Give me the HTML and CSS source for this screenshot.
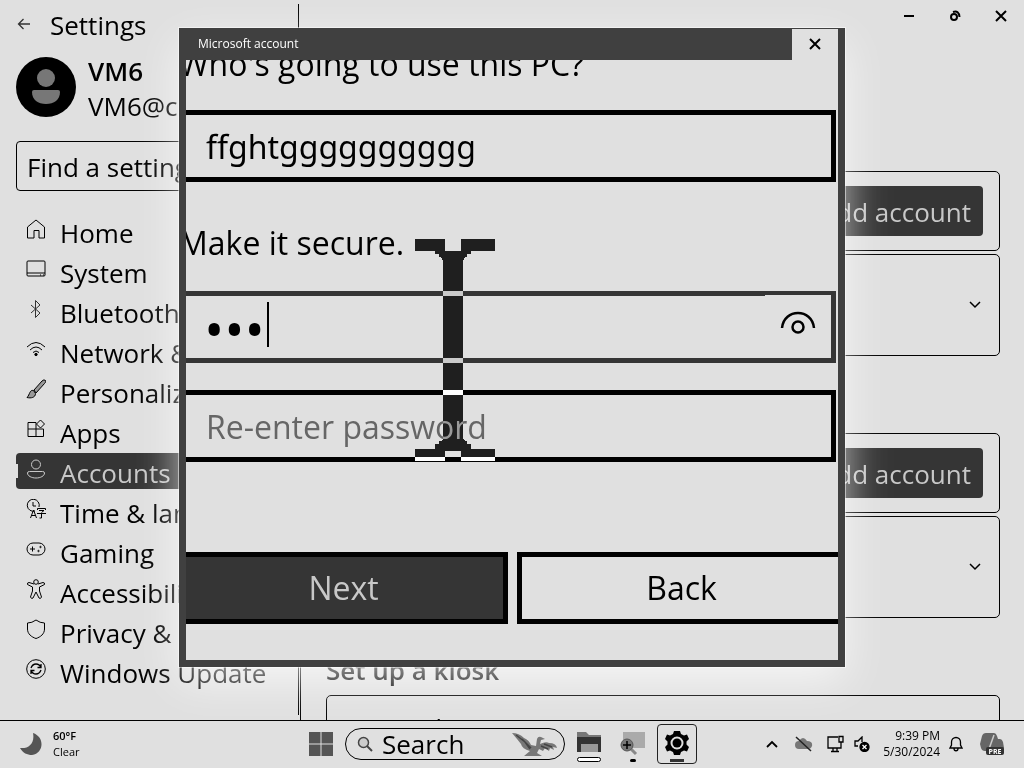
FILE: index.html
```
<!DOCTYPE html>
<html lang="en">
<head>
<meta charset="utf-8">
<meta name="viewport" content="width=device-width, initial-scale=1">
<title>Settings - Accounts</title>
<link rel="stylesheet" href="styles.css">
</head>
<body>
<main class="settings">
  <header class="titlebar">
    <div class="titlebar-left">
      <button class="plain back-nav" aria-label="Go back"><svg width="16" height="12" viewBox="0 0 16 12" fill="none" stroke="#333" stroke-width="1.300"><path d="M6.500 1 1.500 6l5 5M1.500 6H13"/></svg></button>
      <h1>Settings</h1>
    </div>
    <div class="window-controls">
      <button class="plain" aria-label="Minimize"><svg width="12" height="12" viewBox="0 0 12 12" stroke="#000" stroke-width="2"><path d="M1 6h10"/></svg></button>
      <button class="plain" aria-label="Restore"><svg width="12" height="12" viewBox="0 0 12 12" fill="none" stroke="#000" stroke-width="2"><circle cx="5" cy="7" r="3"/><path d="M4 2q6-2 6.500 5"/></svg></button>
      <button class="plain" aria-label="Close"><svg width="12" height="12" viewBox="0 0 12 12" stroke="#000" stroke-width="2"><path d="m1 1 10 10M11 1 1 11"/></svg></button>
    </div>
  </header>
  <div class="columns">
    <aside class="sidebar">
      <div class="profile">
        <svg width="60" height="60" viewBox="0 0 60 60"><circle cx="30" cy="30" r="30"/><circle cx="30" cy="21" r="9" fill="#777"/><path d="M18 33h24q2 0 2 2c0 8-6 12-14 12s-14-4-14-12q0-2 2-2z" fill="#777"/></svg>
        <div><strong>VM6</strong><p>VM6@contoso</p></div>
      </div>
      <input class="find" type="text" placeholder="Find a setting" aria-label="Find a setting">
      <nav>
        <a href="#"><svg viewBox="0 0 20 20"><path d="M1.500 8 10 1l8.500 7v11H13v-7.500H8V19H1.500z"/></svg>Home</a>
        <a href="#"><svg viewBox="0 0 20 20"><rect x="1" y="2" width="18" height="15" rx="1"/><path d="M1 14h18M14 16h1M17 16h1"/></svg>System</a>
        <a href="#"><svg viewBox="0 0 20 20"><path stroke="#333" d="m5 6 9 8-4.500 4.500v-17L14 6l-9 8"/></svg>Bluetooth &amp; devices</a>
        <a href="#"><svg viewBox="0 0 20 20"><path d="M1 8q9-9 18 0M4 11q6-6 12 0M7 13.500q3-3 6 0"/><circle cx="10" cy="15.500" r="1.200" fill="#000"/></svg>Network &amp; internet</a>
        <a href="#"><svg viewBox="0 0 20 20"><path fill="#999" d="m8 11 8-9q2-2 3.500-.5c.5 1 0 2-1 3L10 14zM7.500 11.500c-4-1-3.500 4-6.500 7 4 1 8.500 0 8.500-4z"/></svg>Personalization</a>
        <a href="#"><svg viewBox="0 0 20 20"><path d="M2 3.500h8v14H2zM2 10h15.500v7.500H10M14.500 1l4 4-4 4-4-4z"/></svg>Apps</a>
        <a href="#" class="selected" aria-current="page"><svg viewBox="0 0 20 20"><circle cx="10" cy="5.500" r="4.500"/><path d="M3.500 12.500h13q2 0 2 1.500c0 3-4 5-8.500 5s-8.500-2-8.500-5q0-1.500 2-1.500z"/></svg>Accounts</a>
        <a href="#"><svg viewBox="0 0 20 20"><path d="M9 12A6 6 0 1 1 13 8M7 3v4h3M4.500 19l3-8 3 8M5.500 16.500h4M11.500 11v-1.500h8V11M13 11.500h5l-2.500 2M11 14.500h9M15.500 14v5h-2"/></svg>Time &amp; language</a>
        <a href="#"><svg viewBox="0 0 20 20"><rect x="1" y="4" width="18" height="12" rx="6"/><path d="M6.500 7.500v5M4 10h5"/><circle cx="14.500" cy="8" r=".7"/><circle cx="12.500" cy="12" r=".7"/></svg>Gaming</a>
        <a href="#"><svg viewBox="0 0 20 20"><circle cx="10" cy="3" r="2.300"/><path d="M8 5 3 3.500q-2 0-1.500 2L6.500 8v4l-2 6q1 2.500 2.500 1l3-6 3 6q1.500 1.500 2.500-1l-2-6V8l5-2.500q.5-2-1.500-2L12 5"/></svg>Accessibility</a>
        <a href="#"><svg viewBox="0 0 20 20"><path d="M10 1q4 3 8.500 3v6c0 5-4 8-8.500 9.500C5.500 18 1.500 15 1.500 10V4Q6 4 10 1z"/></svg>Privacy &amp; security</a>
        <a href="#"><svg viewBox="0 0 20 20"><circle cx="10" cy="10" r="9.300"/><path stroke-width="1.300" d="M5 9q1.500-4 5-4t5 3.500M15 5v3.500h-3.500M15 11q-1.500 4-5 4t-5-3.500M5 15v-3.500h3.500"/></svg>Windows Update</a>
      </nav>
    </aside>
    <section class="content">
      <div class="group">
        <div class="card add-card"><button class="add">Add account</button></div>
        <div class="card user-card"><svg class="chevron" viewBox="0 0 12 8"><path d="m1 1 5 5 5-5"/></svg></div>
      </div>
      <div class="group">
        <div class="card add-card"><button class="add">Add account</button></div>
        <div class="card user-card"><svg class="chevron" viewBox="0 0 12 8"><path d="m1 1 5 5 5-5"/></svg></div>
      </div>
      <h2>Set up a kiosk</h2>
      <div class="card kiosk-card">Kiosk</div>
    </section>
  </div>
</main>

<div class="dialog" role="dialog" aria-label="Microsoft account">
  <header class="dialog-bar">
    <span>Microsoft account</span>
    <button class="plain dialog-close" aria-label="Close dialog"><svg width="12" height="12" viewBox="0 0 12 12" stroke="#000" stroke-width="2"><path d="m1 1 10 10M11 1 1 11"/></svg></button>
  </header>
  <div class="dialog-view">
    <form class="account-form">
      <label class="question" for="user">Who's going to use this PC?</label>
      <div class="field"><input id="user" type="text" value="ffghtgggggggggg"></div>
      <label class="secure" for="pass">Make it secure.</label>
      <div class="field focused">
        <input id="pass" type="password" value="abc"><i class="caret"></i>
        <button type="button" class="plain reveal" aria-label="Show password"><svg width="36" height="24" viewBox="0 0 36 24" fill="none" stroke="#000" stroke-width="2.500"><path d="M2 17C4-3 32-3 34 17"/><circle cx="18" cy="16" r="5.500"/></svg></button>
      </div>
      <div class="field"><input type="password" placeholder="Re-enter password" aria-label="Re-enter password"></div>
      <div class="actions"><button type="button" class="next">Next</button><button type="button">Back</button></div>
    </form>
  </div>
  <svg class="pointer" width="80" height="222" viewBox="0 0 80 222" fill="#fff" shape-rendering="crispEdges"><path d="M0 0H30V12H46V0H80V12H56V15H52V18H50L48 22V200L50 202H52V205H56V210H80V222H46V212H30V222H0V210H20V205H24V202H26L28 200V22L26 18H24V15H20V12H0z"/></svg>
</div>

<footer class="taskbar">
  <button class="plain weather"><svg width="22" height="22" viewBox="0 0 22 22"><path d="M13 0c12 4 11 20-1 22-5 0-9-2-12-7 9 1 15-5 13-15z" fill="#555"/></svg><span><b>60°F</b><br>Clear</span></button>
  <div class="apps">
    <button class="plain start" aria-label="Start"><svg width="24" height="24" viewBox="0 0 24 24" fill="#555"><path d="M0 0h11.500v11.500H0zM12.500 0H24v11.500H12.500zM0 12.500h11.500V24H0zM12.500 12.500H24V24H12.500z"/></svg></button>
    <label class="search"><svg width="16" height="16" viewBox="0 0 16 16" fill="#ccc" stroke="#444" stroke-width="1.500"><circle cx="6.500" cy="6.500" r="5"/><path d="m10 10 5 5" stroke-width="2"/></svg><input type="text" placeholder="Search" aria-label="Search"><svg width="46" height="24" viewBox="0 0 46 24"><path d="M0 1q7 0 12 5 5 2 7 7l5 1 1-7q1-3 4-2l4 2-4 1-1 4q6-3 9-1 7 0 8 5l-4-1 1 3-4-2-1 3-4-3-2 3-4-2-2 4 5 3H12l6-5q-8-2-9-7L5 7z" fill="#777"/><path d="m4 3 9 7 5 7M10 7l9 9M32 12l8 3M29 14l7 3" fill="none" stroke="#444" stroke-width="1.500"/></svg></label>
    <button class="plain app" aria-label="File Explorer"><svg width="26" height="32" viewBox="0 0 26 32"><path d="M1 1h9l3 3h12v17H1z" fill="#777"/><path d="M1 6h24v15H1z" fill="#333"/><path d="M5 21v-8h17v8z" fill="#999"/><rect x="1.500" y="26.500" width="23" height="4" rx="2" fill="#fff" stroke="#000"/></svg></button>
    <button class="plain app" aria-label="Magnifier"><svg width="26" height="32" viewBox="0 0 26 32"><path d="M3 1h22v16H3z" fill="#aaa"/><path d="m11 18 5 5" stroke="#888" stroke-width="3"/><circle cx="7" cy="14" r="6" fill="#777" stroke="#555"/><path d="M7 10v8M3 14h8" stroke="#000" stroke-width="1.500"/><rect x="10" y="28" width="6" height="3" rx="1.500"/></svg></button>
    <button class="app active" aria-label="Settings"><svg width="26" height="34" viewBox="0 0 26 34"><path fill-rule="evenodd" d="m10 3-1 3-3 1.500-3-1L1 11l2.500 2.500v3L1 19l2 4.500 3-1L9 24l1 3h6l1-3 3-1.500 3 1 2-4.500-2.500-2.500v-3L25 11l-2-4.500-3 1L17 6l-1-3zm3 5.500a6.500 6.500 0 1 1 0 13 6.500 6.500 0 0 1 0-13z"/><circle cx="13" cy="15" r="4.500"/><path d="M6 31h14v3H6z" fill="#333"/></svg></button>
  </div>
  <div class="tray">
    <button class="plain overflow" aria-label="Show hidden icons"><svg width="12" height="8" viewBox="0 0 12 8" fill="none" stroke="#000" stroke-width="1.800"><path d="m1 7 5-5 5 5"/></svg></button>
    <button class="plain cloud" aria-label="OneDrive"><svg width="18" height="16" viewBox="0 0 18 16"><path d="M4 13a4 4 0 0 1 0-8q4-6 8 0 6 0 5 5-1 3-4 3z" fill="#777"/><path d="m1 1 15 14" stroke="#222" stroke-width="1.500"/></svg></button>
    <button class="plain" aria-label="Network"><svg width="18" height="18" viewBox="0 0 18 18" fill="none" stroke="#000" stroke-width="1.300"><path d="M11 2H1v11h13V8M4 16.500h8M6 13v3M10 13v3M12 1.500h4V7h-4zM14 7v5"/></svg></button>
    <button class="plain" aria-label="Volume"><svg width="16" height="16" viewBox="0 0 16 16" fill="none" stroke="#000" stroke-width="1.300"><path d="M8 6V1L4 5H1v5h3"/><circle cx="10.500" cy="11" r="4.500" fill="#000"/><path d="m8.500 9 4 4M12.500 9l-4 4" stroke="#fff"/></svg></button>
    <button class="plain clock">9:39 PM<br>5/30/2024</button>
    <button class="plain" aria-label="Notifications"><svg width="14" height="16" viewBox="0 0 14 16" fill="none" stroke="#000" stroke-width="1.300"><path d="M2.500 9V6a4.500 4.500 0 0 1 9 0v3l1.500 3H1zM5 12.500c0 3 4 3 4 0"/></svg></button>
    <button class="plain copilot" aria-label="Copilot"><svg width="24" height="24" viewBox="0 0 24 24"><path d="M6 1h8q2 0 3 3l1 3h2q2 0 3 3l1 6q-1 3-4 3H5q-3 0-4-3L0 12 2 4q1-3 4-3z" fill="#666"/><path d="m14 3-5 14" stroke="#ccc" stroke-width="1.500"/><rect x="6" y="15" width="18" height="8" rx="2" fill="#333"/><text x="15" y="22" text-anchor="middle">PRE</text></svg></button>
  </div>
</footer>
</body>
</html>
```
FILE: styles.css
```
* { box-sizing: border-box; }
body {
  margin: 0;
  height: 100vh;
  display: flex;
  flex-direction: column;
  position: relative;
  overflow: hidden;
  background: #e0e0e0;
  color: #000;
  font: 26px/36px "Open Sans", "Noto Sans", sans-serif;
}
button, input { font: inherit; color: inherit; }
h1, h2, p { margin: 0; font-size: inherit; font-weight: 400; }
svg { display: block; flex: none; }
.plain { border: 0; padding: 0; background: none; }

.settings { flex: 1; min-height: 0; overflow: hidden; display: flex; flex-direction: column; }
.titlebar { display: flex; justify-content: space-between; align-items: flex-start; }
.titlebar-left { display: flex; align-items: center; gap: 17px; width: 299px; height: 53px; padding: 0 0 3px 17px; background: linear-gradient(#000, #000) right 4px / 1px 24px no-repeat; }
.back-nav { padding-bottom: 3px; }
.window-controls { display: flex; gap: 34px; padding: 10px 17px 0 0; }
.columns { flex: 1; min-height: 0; display: grid; grid-template-columns: 301px 1fr; }
.sidebar { min-width: 0; padding: 4px 16px 0; border-right: 1px solid #000; background: linear-gradient(#000, #000) right 1px top 0 / 1px 662px no-repeat; overflow: hidden; }
.profile { display: flex; gap: 12px; }
.profile strong { display: block; font-weight: 600; line-height: 28px; }
.profile p { line-height: 42px; }
.find { display: block; width: 100%; height: 50px; margin-top: 14px; padding: 2px 10px 0; border: 1px solid #000; border-radius: 4px; background: none; }
.find::placeholder, .search input::placeholder { color: #000; opacity: 1; }
nav { display: flex; flex-direction: column; gap: 4px; padding-top: 22px; }
nav a { display: flex; align-items: center; gap: 14px; height: 36px; padding: 4px 0 0 10px; border-radius: 4px; color: #000; text-decoration: none; white-space: nowrap; }
nav svg { width: 20px; height: 20px; margin-bottom: 8px; fill: none; stroke: currentColor; }
.selected { background: linear-gradient(#e0e0e0, #e0e0e0) 0 11px / 2px 14px no-repeat #353535; color: #c8c8c8; }

.content { padding: 0 24px 0 25px; }
.group { display: flex; flex-direction: column; gap: 3px; padding-top: 77px; }
.group:first-child { padding-top: 118px; }
.card { border: 1px solid #000; border-radius: 5px; }
.add-card { display: flex; justify-content: flex-end; align-items: center; height: 80px; padding-right: 16px; }
.add { height: 50px; padding: 2px 12px 0; border: 0; border-radius: 4px; background: #353535; color: #c8c8c8; }
.user-card { display: flex; justify-content: flex-end; align-items: center; height: 102px; padding-right: 18px; }
.chevron { width: 12px; height: 8px; fill: none; stroke: #000; stroke-width: 1.500; }
h2 { margin-top: 34px; font-weight: 600; }
.kiosk-card { height: 80px; margin-top: 7px; padding: 14px 58px; }

.dialog { position: absolute; left: 179px; top: 28px; width: 666px; height: 639px; display: flex; flex-direction: column; border: solid #404040; border-width: 1px 7px 7px; background: #e0e0e0; box-shadow: 0 0 0 1px rgba(255, 255, 255, .5), 0 14px 40px rgba(255, 255, 255, .7); }
.dialog-bar { display: flex; height: 31px; margin-left: -1px; background: #404040; color: #fff; font-size: 12px; line-height: 30px; }
.dialog-bar span { flex: 1; padding-left: 13px; }
.dialog-close { display: grid; place-items: center; width: 46px; padding-bottom: 2px; background: #e0e0e0; }
.dialog-view { flex: 1; min-height: 0; overflow: hidden; font-size: 32px; }
.account-form { display: flex; flex-direction: column; margin: -19px 2px 0 -7px; }
.question { height: 69px; line-height: 46px; }
.secure { padding: 38px 0 25px; line-height: 46px; }
.field { position: relative; display: flex; height: 72px; border: 5px solid #000; line-height: 46px; }
.field input { flex: 1; min-width: 0; height: 62px; padding: 0 0 0 22px; border: 0; outline: 0; background: none; line-height: 46px; }
.field input::placeholder { color: #666; opacity: 1; }
.field + .field { margin-top: 27px; }
.field #user { font-family: "Noto Sans", sans-serif; }
.field #pass { padding: 3px 0 0 20px; font-size: 54px; line-height: 58px; }
.focused { border-color: #353535; }
.caret { position: absolute; left: 83px; top: 6px; width: 2px; height: 45px; background: #000; }
.reveal { display: grid; place-items: center; width: 66px; margin-top: -1px; padding-bottom: 8px; background: #e0e0e0; }
.actions { display: grid; grid-template-columns: 1fr 1fr; gap: 9px; margin: 90px -10px 0 0; }
.actions button { height: 72px; border: 5px solid #000; background: #e0e0e0; padding: 0; }
.actions .next { background: #353535; color: #c8c8c8; }
.pointer { position: absolute; left: 229px; top: 210px; mix-blend-mode: difference; pointer-events: none; }

.taskbar { display: grid; grid-template-columns: 1fr auto 1fr; align-items: center; height: 48px; padding: 0 18px; border-top: 1px solid #000; font-size: 11px; line-height: 16px; }
.weather { display: flex; align-items: center; gap: 11px; padding: 0 0 2px 2px; text-align: left; }
.weather b { font-weight: 600; }
.apps { display: flex; align-items: center; margin-left: -18px; padding-bottom: 1px; }
.search { display: flex; align-items: center; gap: 9px; width: 220px; height: 32px; margin: 0 4px 0 12px; padding: 0 6px 0 11px; border: 1px solid #000; border-radius: 16px; font-size: 26px; }
.search input { flex: 1; min-width: 0; padding: 0; border: 0; background: none; }
.app { display: grid; place-items: end center; width: 40px; height: 40px; padding: 0 0 1px; margin-right: 4px; }
.active { margin: 0; border: 1px solid #222; border-radius: 4px; background: none; }
.tray { display: flex; align-items: center; justify-content: flex-end; gap: 9px; padding: 0 2px 2px 0; }
.overflow { margin-right: 8px; }
.cloud { margin-right: 5px; }
.clock { margin-left: 4px; font-size: 12px; text-align: right; }
.copilot { margin-left: 8px; }
.copilot text { font: bold 7px "Open Sans", sans-serif; fill: #fff; }
```
